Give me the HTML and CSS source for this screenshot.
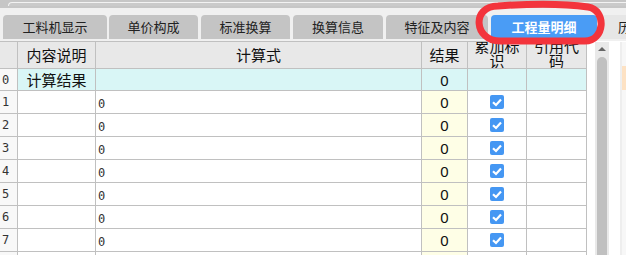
FILE: index.html
```html
<!DOCTYPE html>
<html lang="zh">
<head>
<meta charset="utf-8">
<link rel="stylesheet" href="styles.css">
</head>
<body>
<div class="page">
  <div class="topbar"><div class="topthumb"></div></div>
  <div class="tabbar">
    <div class="tab t1">工料机显示</div>
    <div class="tab t2">单价构成</div>
    <div class="tab t3">标准换算</div>
    <div class="tab t4">换算信息</div>
    <div class="tab t5">特征及内容</div>
    <div class="tab t6 active">工程量明细</div>
    <div class="tab t7">历</div>
  </div>
  <div class="main">
    <div class="grid">
      <div class="c hd"></div>
      <div class="c hd">内容说明</div>
      <div class="c hd">计算式</div>
      <div class="c hd">结果</div>
      <div class="c hd wrap"><span>累加标识</span></div>
      <div class="c hd wrap"><span>引用代码</span></div>

      <div class="c num r0">0</div>
      <div class="c r0 desc">计算结果</div>
      <div class="c r0"></div>
      <div class="c r0 res">0</div>
      <div class="c r0"></div>
      <div class="c r0"></div>

      <div class="c num">1</div><div class="c"></div><div class="c expr">0</div><div class="c res y">0</div><div class="c chk"><i class="cb"></i></div><div class="c"></div>
      <div class="c num">2</div><div class="c"></div><div class="c expr">0</div><div class="c res y">0</div><div class="c chk"><i class="cb"></i></div><div class="c"></div>
      <div class="c num">3</div><div class="c"></div><div class="c expr">0</div><div class="c res y">0</div><div class="c chk"><i class="cb"></i></div><div class="c"></div>
      <div class="c num">4</div><div class="c"></div><div class="c expr">0</div><div class="c res y">0</div><div class="c chk"><i class="cb"></i></div><div class="c"></div>
      <div class="c num">5</div><div class="c"></div><div class="c expr">0</div><div class="c res y">0</div><div class="c chk"><i class="cb"></i></div><div class="c"></div>
      <div class="c num">6</div><div class="c"></div><div class="c expr">0</div><div class="c res y">0</div><div class="c chk"><i class="cb"></i></div><div class="c"></div>
      <div class="c num">7</div><div class="c"></div><div class="c expr">0</div><div class="c res y">0</div><div class="c chk"><i class="cb"></i></div><div class="c"></div>
      <div class="c num"></div><div class="c"></div><div class="c"></div><div class="c y"></div><div class="c"></div><div class="c"></div>
    </div>
    <div class="gap"></div>
    <div class="vscroll">
      <div class="arrow"></div>
      <div class="thumb"></div>
    </div>
    <div class="gap2"></div>
    <div class="stripe"></div>
    <div class="side"><div class="peach"></div></div>
  </div>
  <svg class="mark" width="626" height="60" viewBox="0 0 626 60">
    <path d="M498 6 C471 6 474 41 500 41 L585 41 C605 41 607 10 588 7 C560 3 525 4 498 6 Z" fill="none" stroke="#f3343c" stroke-width="7" stroke-linejoin="round"/>
  </svg>
</div>
</body>
</html>
```
FILE: styles.css
```css
* { box-sizing: border-box; }
html, body { margin: 0; padding: 0; }
body {
  background: #ffffff;
  font-family: "Noto Sans CJK SC", "Noto Sans", sans-serif;
  color: #1a1a1a;
}
.page {
  position: relative;
  width: 626px;
  height: 255px;
  overflow: hidden;
  background: #ffffff;
}
.topbar {
  height: 8px;
  background: #c6c6c6;
  padding: 2px 0 0 8px;
}
.topthumb {
  height: 4px;
  border-top: 1px solid #f2f2f2;
  border-left: 1px solid #f2f2f2;
  border-top-left-radius: 4px;
  background: #cacaca;
}
.tabbar {
  height: 33px;
  background: #f0f0f0;
  display: flex;
  align-items: flex-start;
  padding: 7px 0 0 3px;
  gap: 3px;
  white-space: nowrap;
}
.tab {
  flex: none;
  height: 24px;
  background: #c4c4c4;
  border-radius: 4px 4px 0 0;
  font-size: 13px;
  line-height: 24px;
  text-align: center;
  color: #222;
}
.t1 { width: 104px; margin-right: -1px; }
.t2 { width: 89px; }
.t3 { width: 89px; }
.t4 { width: 90px; }
.t5 { width: 102px; }
.t6 { width: 106px; }
.t7 { width: 40px; background: #e6e6e6; text-align: left; padding-left: 18px; }
.tab.active {
  background: #4a9cf5;
  color: #ffffff;
  font-weight: 700;
}
.main {
  display: flex;
  height: 214px;
}
.grid {
  flex: none;
  width: 587px;
  display: grid;
  grid-template-columns: 18px 78px 326px 46px 59px 60px;
  grid-template-rows: 27px 22px repeat(8, 23px);
  border-top: 1px solid #c0c0c0;
  align-content: start;
}
.c {
  border-right: 1px solid #c0c0c0;
  border-bottom: 1px solid #c0c0c0;
  background: #ffffff;
  font-size: 13px;
  overflow: hidden;
  white-space: nowrap;
}
.hd {
  background: #e8e8e8;
  font-size: 15px;
  line-height: 26px;
  text-align: center;
  color: #111;
}
.hd.wrap {
  display: flex;
  align-items: flex-end;
  justify-content: center;
  white-space: normal;
  line-height: 15px;
  padding: 0 6px 0;
}
.hd.wrap span { display: block; width: 46px; text-align: center; word-break: break-all; }
.r0 { background: #d9f6f6; }
.num {
  background: #f8f8f8;
  font-family: "DejaVu Sans Mono", monospace;
  font-size: 12px;
  line-height: 22px;
  padding-left: 2px;
  color: #333;
}
.num.r0 { background: #f8f8f8; }
.desc {
  font-size: 15px;
  line-height: 21px;
  text-align: center;
  color: #111;
}
.expr {
  font-family: "DejaVu Sans Mono", monospace;
  font-size: 12px;
  line-height: 26px;
  padding-left: 2px;
  color: #333;
}
.res {
  font-family: "Liberation Sans", sans-serif;
  font-size: 15px;
  line-height: 24px;
  text-align: center;
  color: #111;
}
.y { background: #fefee6; }
.chk {
  display: flex;
  align-items: center;
  justify-content: center;
  padding-bottom: 1px;
}
.cb {
  display: block;
  width: 14px;
  height: 14px;
  border-radius: 2px;
  background: #4597f3 url("data:image/svg+xml;utf8,<svg xmlns='http://www.w3.org/2000/svg' width='14' height='14'><path d='M3 7.2 L6 10 L11 4.6' fill='none' stroke='white' stroke-width='2.2'/></svg>") no-repeat center;
}
.gap { flex: none; width: 8px; background: #ffffff; }
.vscroll {
  flex: none;
  width: 14px;
  background: #e9e9e9;
  margin-top: 1px;
  padding: 0 2px;
  position: relative;
}
.arrow {
  width: 0;
  height: 0;
  margin: 5px auto 0;
  border-left: 4px solid transparent;
  border-right: 4px solid transparent;
  border-bottom: 4px solid #666;
}
.thumb {
  margin-top: 6px;
  height: 220px;
  background: #c0c0c0;
  border-radius: 5px 5px 0 0;
}
.gap2 { flex: none; width: 11px; background: #ffffff; }
.stripe { flex: none; width: 2px; background: #eeeeee; margin-top: 1px; }
.side { flex: 1; background: #f7f7f7; margin-top: 1px; padding-top: 24px; }
.peach { height: 24px; background: #fde2c4; }
.mark {
  position: absolute;
  left: 0;
  top: 0;
  pointer-events: none;
}
```
